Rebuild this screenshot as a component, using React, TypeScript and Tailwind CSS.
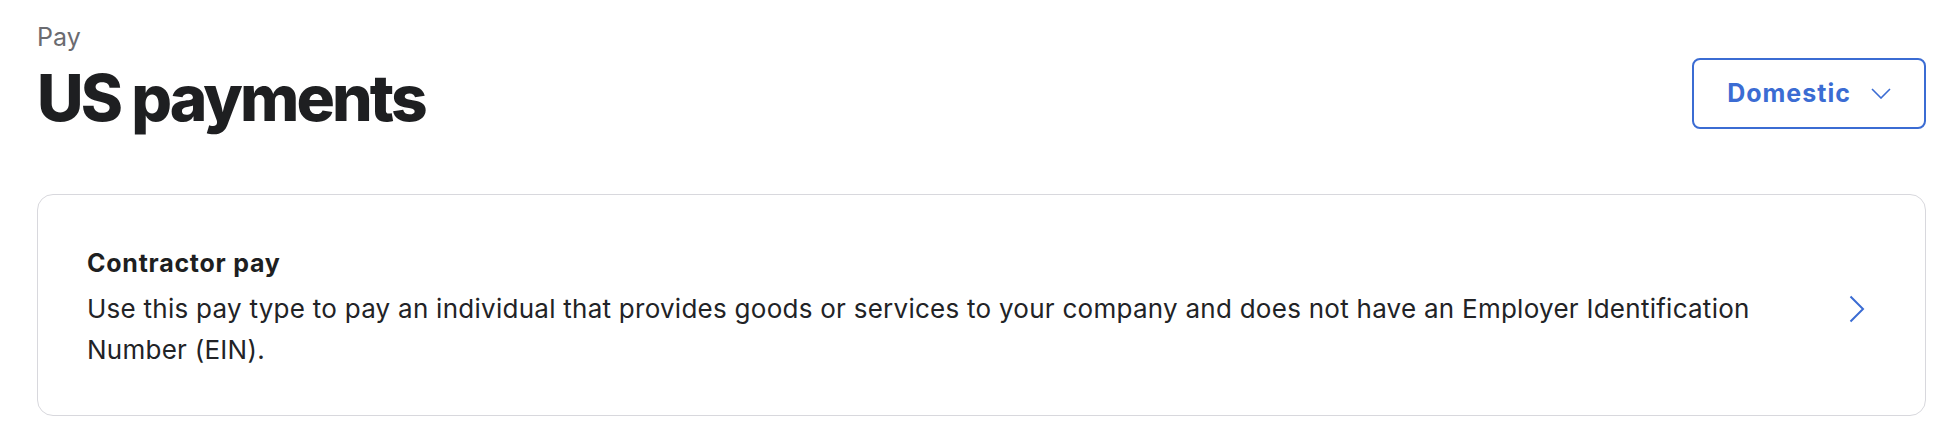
import React from "react";

export default function App() {
  return (
    <div className="min-h-[440px] bg-white pl-[37px] pr-[30px] pt-[21px] font-['Inter',sans-serif]">
      <div className="flex items-start justify-between">
        <div>
          <div className="text-[25px] leading-[32px] text-[#6b6b70]">Pay</div>
          <h1 className="mt-[9px] text-[64px] font-extrabold leading-[72px] tracking-[-0.045em] text-[#1e1f21]">
            US payments
          </h1>
        </div>
        <button className="mt-[37px] flex h-[71px] w-[234px] items-center justify-center gap-[20px] rounded-[8px] border-2 border-[#3b6cd3] bg-white text-[25px] font-bold tracking-[0.04em] text-[#3b6cd3]">
          <span>Domestic</span>
          <svg width="20" height="11" viewBox="0 0 20 11" fill="none">
            <path d="M1 1l9 9 9-9" stroke="#3b6cd3" strokeWidth="1.6" />
          </svg>
        </button>
      </div>
      <div className="mt-[60px] flex items-center rounded-[16px] border border-[#d8d8dd] bg-white pb-[45px] pl-[49px] pr-[60px] pt-[52px]">
        <div className="flex-1 pr-[48px]">
          <div className="text-[25px] font-bold leading-[32px] tracking-[0.03em] text-[#1e1f21]">Contractor pay</div>
          <p className="mt-[9px] text-[26px] leading-[41px] tracking-[0.01em] text-[#222326]">
            Use this pay type to pay an individual that provides goods or services to your company and does not have an Employer Identification Number (EIN).
          </p>
        </div>
        <svg width="16" height="28" viewBox="0 0 16 28" fill="none" className="shrink-0">
          <path d="M1.5 1.5L14 14L1.5 26.5" stroke="#3b6cd3" strokeWidth="2" />
        </svg>
      </div>
    </div>
  );
}
